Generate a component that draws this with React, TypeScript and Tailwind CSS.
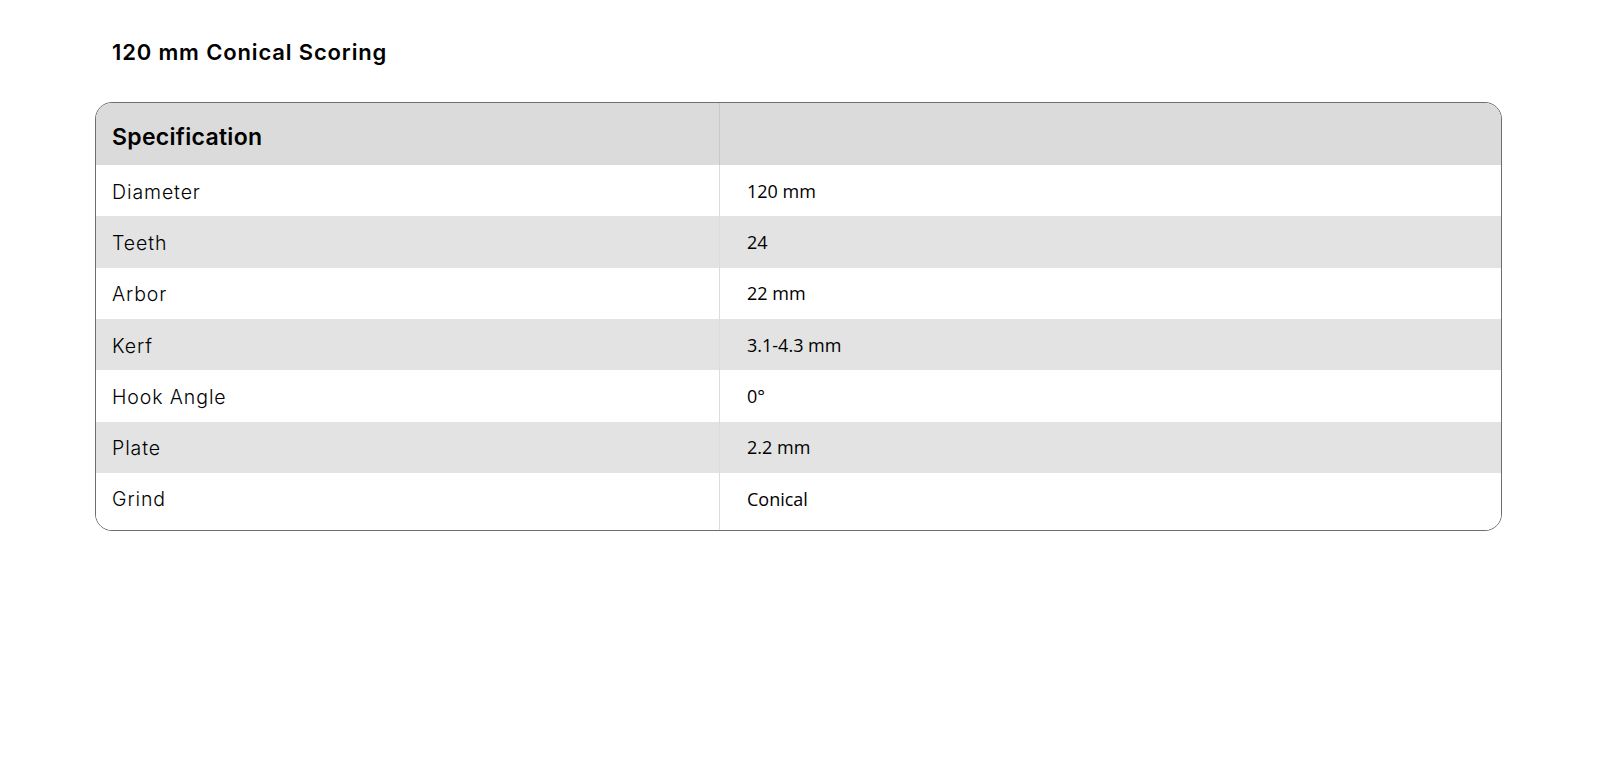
import React from "react";

const rows: [string, string][] = [
  ["Diameter", "120 mm"],
  ["Teeth", "24"],
  ["Arbor", "22 mm"],
  ["Kerf", "3.1-4.3 mm"],
  ["Hook Angle", "0°"],
  ["Plate", "2.2 mm"],
  ["Grind", "Conical"],
];

export default function App() {
  return (
    <div className="min-h-[780px] w-full bg-white pl-[95px] pr-[98px] pt-[37px] text-black">
      <h1 className="pl-[17px] text-[22px] font-semibold leading-[30px] tracking-[0.85px] [font-family:Inter,'Noto_Sans',sans-serif]">
        120 mm Conical Scoring
      </h1>
      <div className="mt-[35px] overflow-hidden rounded-[17px] border border-[#6e6e6e]">
        <div className="grid grid-cols-[623px_1fr]">
          <div className="flex h-[62px] items-center bg-[#dbdbdb] pl-[16px] pt-[7px] text-[23px] font-semibold tracking-[0.3px] [font-family:Inter,sans-serif]">
            Specification
          </div>
          <div className="h-[62px] border-l border-[#c8c8c8] bg-[#dbdbdb]" />
          {rows.map(([k, v], i) => {
            const last = i === rows.length - 1;
            const bg = i % 2 === 1 ? "bg-[#e3e3e3]" : "bg-white";
            return (
              <React.Fragment key={k}>
                <div
                  className={`flex items-center pl-[16px] text-[19.5px] font-[350] tracking-[0.9px] [font-family:Inter,sans-serif] ${bg} ${
                    last ? "h-[57px] pb-[3px]" : "h-[51.33px] pt-[3px]"
                  }`}
                >
                  {k}
                </div>
                <div
                  className={`flex items-center border-l border-[#dcdcdc] pl-[27px] text-[18px] [font-family:'Open_Sans','Noto_Sans',sans-serif] ${bg} ${
                    last ? "h-[57px] pb-[4px]" : "h-[51.33px] pt-[1px]"
                  }`}
                >
                  {v}
                </div>
              </React.Fragment>
            );
          })}
        </div>
      </div>
    </div>
  );
}
